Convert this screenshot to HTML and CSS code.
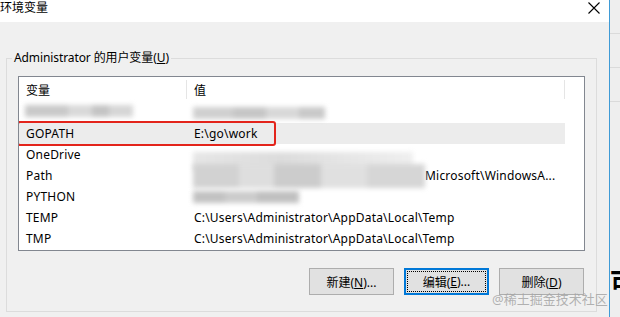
FILE: index.html
```html
<!DOCTYPE html>
<html lang="zh-CN">
<head>
  <meta charset="UTF-8">
  <title>环境变量</title>
  <link rel="stylesheet" href="styles.css">
</head>
<body>

  <div class="window">
    <div class="titlebar">
      <span class="title">环境变量</span>
      <svg class="close" width="12" height="12" viewBox="0 0 12 12">
        <path d="M0.5 0.5 L11.5 11.5 M11.5 0.5 L0.5 11.5" stroke="#000" stroke-width="1.1" fill="none"/>
      </svg>
    </div>

    <fieldset class="group">
      <legend>Administrator 的用户变量(<u>U</u>)</legend>

      <div class="listbox">
        <div class="row head">
          <div class="c1">变量</div>
          <div class="c2">值</div>
        </div>
        <div class="row">
          <div class="c1"><span class="blur b-name"></span></div>
          <div class="c2"><span class="blur b-val0"></span></div>
        </div>
        <div class="row selected">
          <div class="c1">GOPATH</div>
          <div class="c2">E:\go\work</div>
        </div>
        <div class="row">
          <div class="c1">OneDrive</div>
          <div class="c2"><span class="blur b-onedrive"></span></div>
        </div>
        <div class="row">
          <div class="c1">Path</div>
          <div class="c2"><span class="blur b-path"></span><span class="cut">Microsoft\WindowsA...</span></div>
        </div>
        <div class="row">
          <div class="c1">PYTHON</div>
          <div class="c2"><span class="blur b-python"></span></div>
        </div>
        <div class="row">
          <div class="c1">TEMP</div>
          <div class="c2">C:\Users\Administrator\AppData\Local\Temp</div>
        </div>
        <div class="row">
          <div class="c1">TMP</div>
          <div class="c2">C:\Users\Administrator\AppData\Local\Temp</div>
        </div>

        <div class="mark"></div>
      </div>

      <div class="buttons">
        <button>新建(<u>N</u>)...</button>
        <button class="focused"><span>编辑(<u>E</u>)...</span></button>
        <button>删除(<u>D</u>)</button>
      </div>
    </fieldset>

    <div class="watermark">@稀土掘金技术社区</div>
  </div>

  <div class="side">
    <div class="side-line"></div>
    <div class="side-line"></div>
    <div class="side-line"></div>
    <div class="side-char">可</div>
  </div>

</body>
</html>
```

FILE: styles.css
```css
:root {
  --face: #f0f0f0;
  --list-border: #828790;
  --group-border: #dcdcdc;
  --btn: #e1e1e1;
  --btn-border: #adadad;
  --accent: #0078d7;
  --mark: #e3241b;
}

body {
  margin: 0;
  width: 620px;
  height: 317px;
  overflow: hidden;
  display: flex;
  font-family: "Noto Sans", "Noto Sans CJK SC", sans-serif;
  font-size: 12px;
  color: #000;
  background: var(--face);
}

.window {
  position: relative;
  width: 609px;
  flex: none;
  background: var(--face);
  border-right: 1px solid #3f9bd6;
}

.titlebar {
  height: 22px;
  background: #fff;
  display: flex;
  justify-content: space-between;
  align-items: flex-start;
}

.title {
  line-height: 16px;
}

.close {
  margin: 2px 9px 0 0;
}

.group {
  margin: 28px 12px 0 6px;
  padding: 10px 11px 16px 11px;
  border: 1px solid var(--group-border);
  min-width: 0;
}

.group legend {
  margin-left: -6px;
  padding: 0 2px;
  line-height: 16px;
  letter-spacing: -0.1px;
}

.listbox {
  position: relative;
  height: 173px;
  background: #fff;
  border: 1px solid var(--list-border);
  overflow: hidden;
}

.row {
  display: flex;
  width: 546px;
  height: 21px;
  align-items: center;
  white-space: nowrap;
  letter-spacing: 0.2px;
}

.row.head {
  height: 25px;
  letter-spacing: 0;
}

.c1 {
  width: 168px;
  flex: none;
  box-sizing: border-box;
  padding-left: 7px;
}

.c2 {
  flex: 1;
  box-sizing: border-box;
  padding-left: 7px;
  display: flex;
  align-items: center;
}

.head .c1,
.head .c2 {
  align-self: stretch;
  display: flex;
  align-items: center;
  background: linear-gradient(#e5e5e5, #e5e5e5) no-repeat right center / 1px 19px;
}

.selected {
  background: #ececec;
}

.blur {
  display: inline-block;
  filter: blur(2.5px);
}

.b-name {
  width: 108px;
  height: 12px;
  margin-left: -1px;
  background: linear-gradient(to right, #c9c9c9 0 40%, #d9d9d9 40% 62%, #c4c4c4 62% 78%, #d6d6d6 78%);
}

.b-val0 {
  width: 132px;
  height: 12px;
  margin-left: -1px;
  background: linear-gradient(to right, #d0d0d0 0 30%, #c6c6c6 30% 55%, #d8d8d8 55% 80%, #c9c9c9 80%);
}

.b-onedrive {
  width: 220px;
  height: 18px;
  margin-left: -1px;
  margin-top: 12px;
  background: linear-gradient(to right, #e6e6e6, #dcdcdc 40%, #e6e6e6 70%, #efefef);
}

.b-path {
  width: 232px;
  height: 24px;
  margin-left: -1px;
  background: linear-gradient(to right, #d2d2d2 0 20%, #dedede 20% 35%, #cccccc 35% 55%, #e0e0e0 55% 75%, #d6d6d6 75%);
}

.cut {
  margin-left: 0;
}

.b-python {
  width: 106px;
  height: 12px;
  margin-left: -1px;
  background: linear-gradient(to right, #c2c2c2 0 30%, #cccccc 30% 60%, #c0c0c0 60%);
}

/* red annotation round the GOPATH row */
.mark {
  position: absolute;
  left: -2px;
  top: 44px;
  width: 255px;
  height: 21px;
  border: 2px solid var(--mark);
  border-radius: 3px;
}

.buttons {
  display: flex;
  justify-content: flex-end;
  gap: 10px;
  margin-top: 17px;
  padding-right: 1px;
}

.buttons button {
  width: 85px;
  height: 27px;
  margin: 0;
  padding: 0;
  font: inherit;
  color: #000;
  background: var(--btn);
  border: 1px solid var(--btn-border);
}

.buttons button.focused {
  border: 2px solid var(--accent);
  padding: 1px;
}

.buttons button.focused span {
  display: flex;
  height: 100%;
  align-items: center;
  justify-content: center;
  outline: 1px dotted #000;
  outline-offset: -1px;
}

.watermark {
  position: absolute;
  left: 492px;
  top: 289px;
  font-size: 13px;
  color: rgba(165, 165, 165, 0.85);
  white-space: nowrap;
}

.side {
  flex: 1;
  overflow: hidden;
  background: #eeeeee;
  display: flex;
  flex-direction: column;
  padding-top: 33px;
  gap: 33px;
}

.side-line {
  height: 1px;
  background: #dadada;
}

.side-char {
  margin-top: 132px;
  font-size: 26px;
  font-weight: bold;
  line-height: 30px;
  white-space: nowrap;
}
```
